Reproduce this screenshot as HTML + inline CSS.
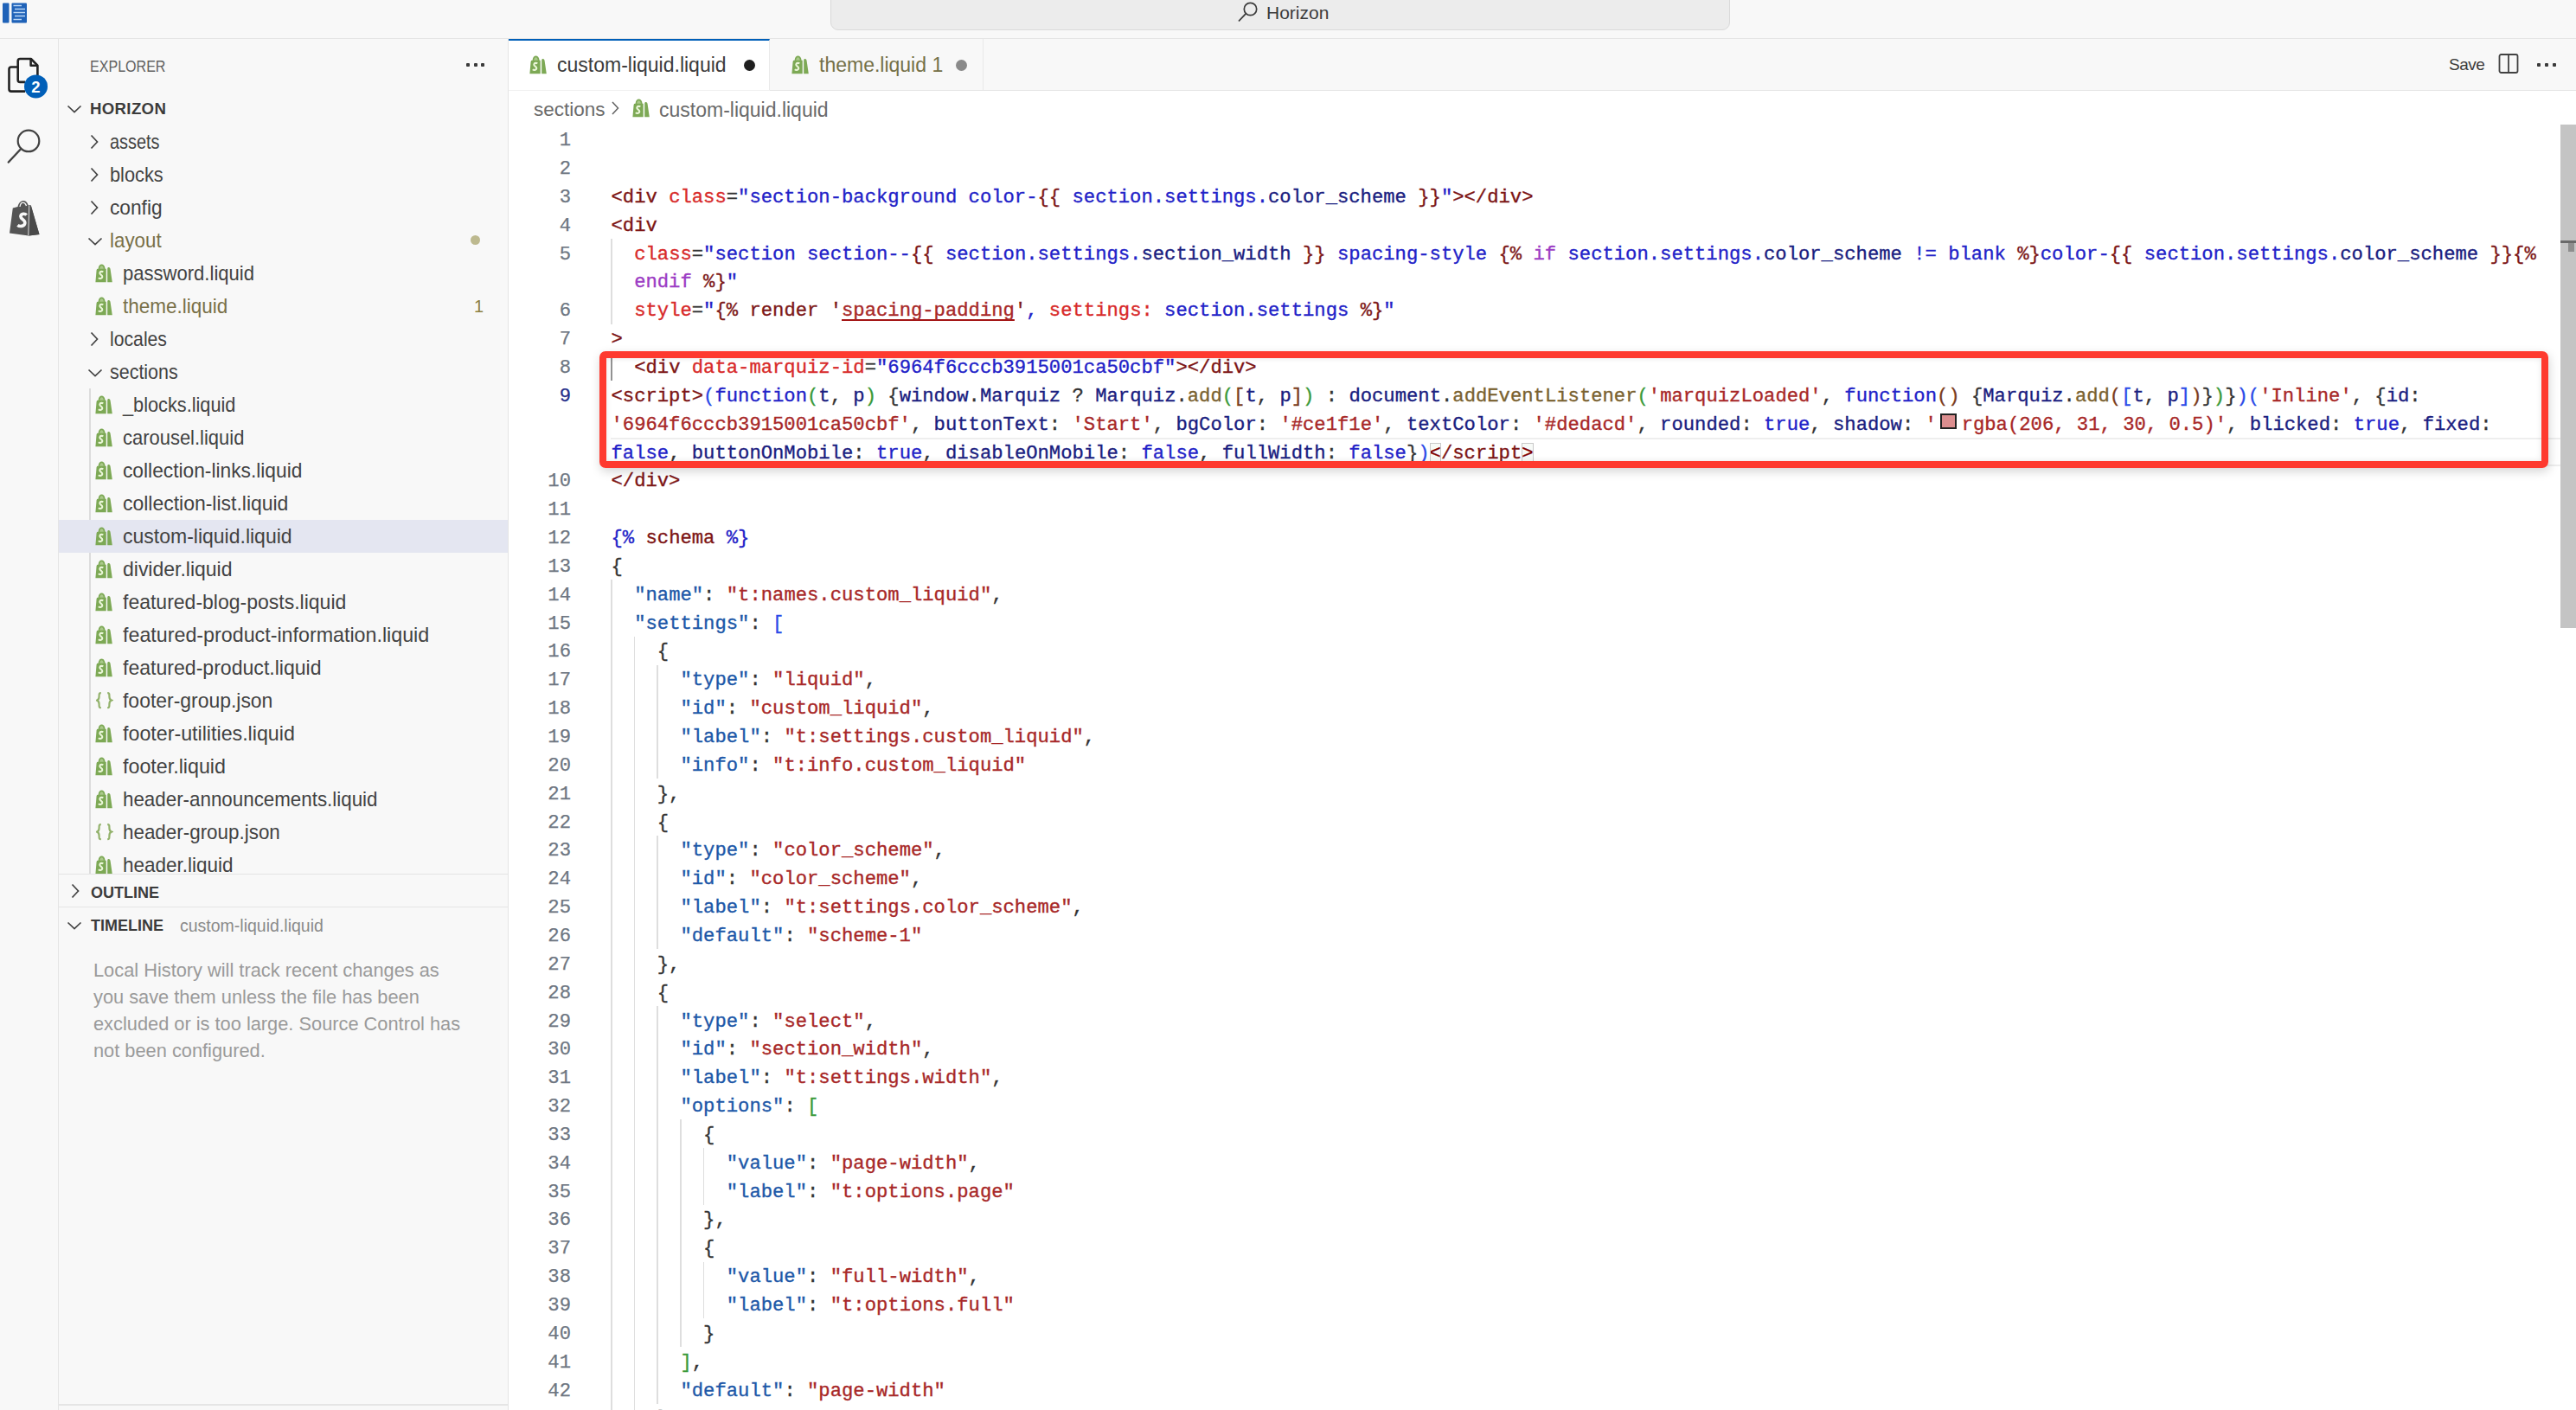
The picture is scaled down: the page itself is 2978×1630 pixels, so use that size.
<!DOCTYPE html>
<html><head><meta charset="utf-8"><style>
*{box-sizing:border-box;margin:0;padding:0}
html,body{width:2978px;height:1630px;overflow:hidden;background:#fff}
body{position:relative;font-family:"Liberation Sans",sans-serif;color:#3b3b3b}
.abs{position:absolute}
#title{position:absolute;left:0;top:0;width:2978px;height:45px;background:#f8f8f8;border-bottom:1px solid #e5e5e5}
#cmd{position:absolute;left:960px;top:-11px;width:1040px;height:46px;background:#ececec;border:1.5px solid #d9d9d9;border-radius:9px}
#cmdtxt{position:absolute;left:1464px;top:0px;font-size:21px;line-height:30px;color:#3b3b3b}
#act{position:absolute;left:0;top:45px;width:68px;height:1585px;background:#f8f8f8;border-right:1.5px solid #e5e5e5}
#side{position:absolute;left:68px;top:45px;width:520px;height:1585px;background:#f8f8f8;border-right:1.5px solid #e5e5e5}
#tabs{position:absolute;left:588px;top:45px;width:2390px;height:60px;background:#f8f8f8;border-bottom:1.5px solid #e5e5e5}
#tab1{position:absolute;left:588px;top:45px;width:302px;height:60px;background:#fff;border-top:2px solid #005fb8;border-right:1px solid #eaeaea}
#tab2{position:absolute;left:890px;top:45px;width:247px;height:59px;background:#f8f8f8;border-right:1px solid #e8e8e8}
.tabt{position:absolute;font-size:23px;line-height:60px;top:45px;white-space:pre}
#editor{position:absolute;left:588px;top:105px;width:2390px;height:1525px;background:#fff}
.bc{position:absolute;top:107.5px;font-size:22.5px;line-height:38px;color:#6a6a6a;white-space:pre}
.cl{position:absolute;height:32.85px;line-height:32.85px;font-family:"Liberation Mono",monospace;font-size:22.213px;white-space:pre;color:#3b3b3b;-webkit-text-stroke:0.35px currentColor}
.ln{position:absolute;left:560px;width:100px;text-align:right;height:32.85px;line-height:32.85px;font-family:"Liberation Mono",monospace;font-size:22.213px;color:#6e7681;-webkit-text-stroke:0.25px currentColor}
.ln.act{color:#262f8a}
.tg{color:#7d1515}.at{color:#d82a2a}.sv{color:#2222c8}.lq{color:#7d1818}.kw{color:#9c3cc4}.dk{color:#333333}
.nv{color:#1a2080}.fn{color:#7a6230}.st{color:#a82828}.b1{color:#2a4ae8}.b2{color:#3a9a3a}.b3{color:#7b3c1c}
.bl{color:#2222c8}.jk{color:#1d58a8}
.u{text-decoration:underline;text-decoration-color:#a31515;text-underline-offset:4px;text-decoration-thickness:2px}
.sw{display:inline-block;width:28.7px;height:20px;vertical-align:-3px;position:relative}
.sw:after{content:"";position:absolute;left:4.5px;top:-2px;width:14.7px;height:14.7px;border:2px solid #222;background:#dc8e8f}
.bx{outline:1.5px solid #c9c9c9;outline-offset:-1px;background:rgba(0,100,0,0.03);color:#800000}
.ig{position:absolute;width:1.7px;background:#dedede}
.ig.ac{background:#939393}
#curline{position:absolute;left:706px;width:2254px;height:32.85px;border-top:2px solid #eeeeee;border-bottom:2px solid #eeeeee}
#curgut{position:absolute;left:588px;width:118px;height:32.85px}
#scroll{position:absolute;left:2960px;top:144px;width:18px;height:582px;background:#c4c4c4}
#redbox{position:absolute;left:693px;top:406px;width:2253px;height:134.5px;border:8.3px solid #fe3a2f;border-radius:7px;box-shadow:1px 4px 12px rgba(0,0,0,0.17), inset 0 0 7px rgba(0,0,0,0.10)}
.shp{position:absolute}
.jsi{position:absolute;font-size:19px;line-height:38px;color:#8fb35f;letter-spacing:-1px;font-family:"Liberation Mono",monospace}
.chev{position:absolute}
.sbt{position:absolute;font-size:23.2px;line-height:38px;color:#424242;white-space:pre;transform-origin:0 50%}
.sbt.warn{color:#787048}
.selrow{position:absolute;left:68px;width:519px;height:38px;background:#e4e6f1}
.wdot{position:absolute;left:544px;width:11px;height:11px;border-radius:50%;background:#bdb98f}
.wnum{position:absolute;left:548px;font-size:20px;line-height:38px;color:#8d8040}
.tgd{position:absolute;width:1.5px;background:#dcdcdc}
.hdr{position:absolute;font-weight:bold;font-size:18.6px;line-height:38px;color:#3b3b3b}
</style></head><body>
<div id="title"></div>
<div id="cmd"></div>
<svg class="abs" style="left:1430px;top:1px" width="26" height="26" viewBox="0 0 26 26"><circle cx="15.5" cy="9.5" r="7.2" stroke="#3b3b3b" stroke-width="1.7" fill="none"/><path d="M10.4 14.6 L2 23.5" stroke="#3b3b3b" stroke-width="1.8"/></svg>
<div id="cmdtxt">Horizon</div>
<svg class="abs" style="left:2px;top:3px" width="30" height="24" viewBox="0 0 30 24">
 <rect x="1" y="0.5" width="7.5" height="23" rx="1" fill="#1f62b8"/>
 <rect x="11.5" y="0.5" width="17.5" height="23" rx="1" fill="#1f62b8"/>
 <path d="M13.5 3.5 H23 M15 7.5 H27 M13.5 11.5 H27 M15 15.5 H27 M13.5 19.5 H23" stroke="#bcd8f5" stroke-width="1.6"/>
</svg>

<div id="act"></div>
<svg class="abs" style="left:0px;top:55px" width="60" height="60" viewBox="0 55 60 60">
 <path d="M20.7 77.5 H13 Q10.5 77.5 10.5 80 V103 Q10.5 105.6 13 105.6 H29" stroke="#222" stroke-width="2.6" fill="none" stroke-linejoin="round"/>
 <path d="M29 94.9 H23.2 Q20.7 94.9 20.7 92.4 V70.5 Q20.7 68 23.2 68 H35.8 L43.4 75.6 V88" stroke="#222" stroke-width="2.6" fill="none" stroke-linejoin="round"/>
 <path d="M35.6 68.5 V75.8 H43" stroke="#222" stroke-width="2.6" fill="none" stroke-linejoin="round"/>
 <circle cx="41.5" cy="99.9" r="13.5" fill="#005fb8"/>
 <text x="41.5" y="106.6" text-anchor="middle" font-family="Liberation Sans" font-weight="bold" font-size="18.5" fill="#fff">2</text>
</svg>
<svg class="abs" style="left:6px;top:145px" width="44" height="48" viewBox="0 0 44 48">
 <circle cx="27" cy="17.9" r="12.3" stroke="#424242" stroke-width="2.2" fill="none"/>
 <path d="M17.8 27.5 L3.8 42.5" stroke="#424242" stroke-width="2.4" stroke-linecap="round"/>
</svg>
<svg class="abs" style="left:9px;top:231px" width="38" height="42" viewBox="0 0 38 42">
 <path d="M2 38.5 L5.8 9.5 L11.5 8 C12.5 3 15.5 0.8 18.5 1 C21.2 1.2 23 3.5 23.8 6.5 L26.5 6 L36.5 40 L24 41.5 Z" fill="#555"/>
 <path d="M26.8 6.2 L36.5 40 L24.5 41.5" fill="#4a4a4a"/>
 <path d="M24.7 7 L23.8 41" stroke="#ddd" stroke-width="1"/>
 <path d="M14 8 C14.5 4.8 16 3 18 3.1 C19.8 3.3 20.8 5 21.5 7" stroke="#f8f8f8" stroke-width="1.3" fill="none"/>
 <path d="M21.6 17.6 C20 15.6 15.4 15.6 14.9 19 C14.4 22.6 20.4 22.4 19.8 27 C19.3 31 13.6 31.2 11.4 29.4" stroke="#f8f8f8" stroke-width="3.6" fill="none"/>
</svg>

<div id="side"></div>
<div class="abs" style="left:103.5px;top:47px;font-size:19px;line-height:60px;color:#616161;transform:scaleX(0.845);transform-origin:0 50%">EXPLORER</div>
<div class="abs" style="left:539px;top:72.5px;width:4px;height:4px;background:#3b3b3b;border-radius:1px"></div>
<div class="abs" style="left:547.5px;top:72.5px;width:4px;height:4px;background:#3b3b3b;border-radius:1px"></div>
<div class="abs" style="left:556px;top:72.5px;width:4px;height:4px;background:#3b3b3b;border-radius:1px"></div>
<svg class="chev" style="left:77px;top:119.5px" width="18" height="12" viewBox="0 0 18 12"><path d="M1.5 2.5 L9 9.5 L16.5 2.5" stroke="#424242" stroke-width="1.7" fill="none"/></svg>
<div class="hdr" style="left:104px;top:106.8px;letter-spacing:0.35px">HORIZON</div>
<div class="tgd" style="left:103px;top:448.8px;height:561.7px"></div><div class="tgd" style="left:103px;top:296.8px;height:76.0px;opacity:0"></div>
<svg class="chev" style="left:102.5px;top:154.8px" width="12" height="18" viewBox="0 0 12 18"><path d="M2.5 1.5 L9.5 9 L2.5 16.5" stroke="#424242" stroke-width="1.7" fill="none"/></svg>
<div class="sbt" style="left:127.2px;top:144.8px;transform:scaleX(0.857)">assets</div>
<svg class="chev" style="left:102.5px;top:192.8px" width="12" height="18" viewBox="0 0 12 18"><path d="M2.5 1.5 L9.5 9 L2.5 16.5" stroke="#424242" stroke-width="1.7" fill="none"/></svg>
<div class="sbt" style="left:127.2px;top:182.8px;transform:scaleX(0.938)">blocks</div>
<svg class="chev" style="left:102.5px;top:230.8px" width="12" height="18" viewBox="0 0 12 18"><path d="M2.5 1.5 L9.5 9 L2.5 16.5" stroke="#424242" stroke-width="1.7" fill="none"/></svg>
<div class="sbt" style="left:127.2px;top:220.8px;transform:scaleX(0.979)">config</div>
<svg class="chev" style="left:100.5px;top:273.3px" width="18" height="12" viewBox="0 0 18 12"><path d="M1.5 2.5 L9 9.5 L16.5 2.5" stroke="#424242" stroke-width="1.7" fill="none"/></svg>
<div class="sbt warn" style="left:127.2px;top:258.8px;transform:scaleX(0.963)">layout</div>
<div class="wdot" style="top:272.3px"></div>
<svg class="shp" style="left:110.0px;top:304.6px" width="21" height="22" viewBox="0 0 21 22"><path d="M0.4 21.2 L1.6 7.2 Q1.8 5.8 3.2 5.8 L3.6 5.8 C3.9 2.2 5.6 0.6 7.5 0.6 C9.4 0.6 11.2 2.2 11.6 5.8 L12.7 5.8 L12.7 21.2 Z" fill="#7da955"/><path d="M5.2 5.8 C5.4 3.4 6.3 2.2 7.5 2.2 C8.7 2.2 9.6 3.4 9.8 5.8" fill="#a9c98a"/><path d="M14.2 21.2 L14.2 6 C14.2 4.6 14.8 4 15.6 4 C16.6 4 17.4 4.8 17.6 6.2 L19.8 21.2 Z" fill="#7da955"/><path d="M9.2 9.4 C8.4 8.6 5.6 8.4 5.3 10.6 C5.1 12.6 8.6 12.8 8.3 15.2 C8 17.4 5 17.2 3.8 16.2" stroke="#eaf6d8" stroke-width="2.1" fill="none"/></svg>
<div class="sbt" style="left:142px;top:296.8px;transform:scaleX(0.951)">password.liquid</div>
<svg class="shp" style="left:110.0px;top:342.6px" width="21" height="22" viewBox="0 0 21 22"><path d="M0.4 21.2 L1.6 7.2 Q1.8 5.8 3.2 5.8 L3.6 5.8 C3.9 2.2 5.6 0.6 7.5 0.6 C9.4 0.6 11.2 2.2 11.6 5.8 L12.7 5.8 L12.7 21.2 Z" fill="#7da955"/><path d="M5.2 5.8 C5.4 3.4 6.3 2.2 7.5 2.2 C8.7 2.2 9.6 3.4 9.8 5.8" fill="#a9c98a"/><path d="M14.2 21.2 L14.2 6 C14.2 4.6 14.8 4 15.6 4 C16.6 4 17.4 4.8 17.6 6.2 L19.8 21.2 Z" fill="#7da955"/><path d="M9.2 9.4 C8.4 8.6 5.6 8.4 5.3 10.6 C5.1 12.6 8.6 12.8 8.3 15.2 C8 17.4 5 17.2 3.8 16.2" stroke="#eaf6d8" stroke-width="2.1" fill="none"/></svg>
<div class="sbt warn" style="left:142px;top:334.8px;transform:scaleX(0.970)">theme.liquid</div>
<div class="wnum" style="top:334.8px">1</div>
<svg class="chev" style="left:102.5px;top:382.8px" width="12" height="18" viewBox="0 0 12 18"><path d="M2.5 1.5 L9.5 9 L2.5 16.5" stroke="#424242" stroke-width="1.7" fill="none"/></svg>
<div class="sbt" style="left:127.2px;top:372.8px;transform:scaleX(0.914)">locales</div>
<svg class="chev" style="left:100.5px;top:425.3px" width="18" height="12" viewBox="0 0 18 12"><path d="M1.5 2.5 L9 9.5 L16.5 2.5" stroke="#424242" stroke-width="1.7" fill="none"/></svg>
<div class="sbt" style="left:127.2px;top:410.8px;transform:scaleX(0.925)">sections</div>
<svg class="shp" style="left:110.0px;top:456.6px" width="21" height="22" viewBox="0 0 21 22"><path d="M0.4 21.2 L1.6 7.2 Q1.8 5.8 3.2 5.8 L3.6 5.8 C3.9 2.2 5.6 0.6 7.5 0.6 C9.4 0.6 11.2 2.2 11.6 5.8 L12.7 5.8 L12.7 21.2 Z" fill="#7da955"/><path d="M5.2 5.8 C5.4 3.4 6.3 2.2 7.5 2.2 C8.7 2.2 9.6 3.4 9.8 5.8" fill="#a9c98a"/><path d="M14.2 21.2 L14.2 6 C14.2 4.6 14.8 4 15.6 4 C16.6 4 17.4 4.8 17.6 6.2 L19.8 21.2 Z" fill="#7da955"/><path d="M9.2 9.4 C8.4 8.6 5.6 8.4 5.3 10.6 C5.1 12.6 8.6 12.8 8.3 15.2 C8 17.4 5 17.2 3.8 16.2" stroke="#eaf6d8" stroke-width="2.1" fill="none"/></svg>
<div class="sbt" style="left:142px;top:448.8px;transform:scaleX(0.937)">_blocks.liquid</div>
<svg class="shp" style="left:110.0px;top:494.6px" width="21" height="22" viewBox="0 0 21 22"><path d="M0.4 21.2 L1.6 7.2 Q1.8 5.8 3.2 5.8 L3.6 5.8 C3.9 2.2 5.6 0.6 7.5 0.6 C9.4 0.6 11.2 2.2 11.6 5.8 L12.7 5.8 L12.7 21.2 Z" fill="#7da955"/><path d="M5.2 5.8 C5.4 3.4 6.3 2.2 7.5 2.2 C8.7 2.2 9.6 3.4 9.8 5.8" fill="#a9c98a"/><path d="M14.2 21.2 L14.2 6 C14.2 4.6 14.8 4 15.6 4 C16.6 4 17.4 4.8 17.6 6.2 L19.8 21.2 Z" fill="#7da955"/><path d="M9.2 9.4 C8.4 8.6 5.6 8.4 5.3 10.6 C5.1 12.6 8.6 12.8 8.3 15.2 C8 17.4 5 17.2 3.8 16.2" stroke="#eaf6d8" stroke-width="2.1" fill="none"/></svg>
<div class="sbt" style="left:142px;top:486.8px;transform:scaleX(0.947)">carousel.liquid</div>
<svg class="shp" style="left:110.0px;top:532.6px" width="21" height="22" viewBox="0 0 21 22"><path d="M0.4 21.2 L1.6 7.2 Q1.8 5.8 3.2 5.8 L3.6 5.8 C3.9 2.2 5.6 0.6 7.5 0.6 C9.4 0.6 11.2 2.2 11.6 5.8 L12.7 5.8 L12.7 21.2 Z" fill="#7da955"/><path d="M5.2 5.8 C5.4 3.4 6.3 2.2 7.5 2.2 C8.7 2.2 9.6 3.4 9.8 5.8" fill="#a9c98a"/><path d="M14.2 21.2 L14.2 6 C14.2 4.6 14.8 4 15.6 4 C16.6 4 17.4 4.8 17.6 6.2 L19.8 21.2 Z" fill="#7da955"/><path d="M9.2 9.4 C8.4 8.6 5.6 8.4 5.3 10.6 C5.1 12.6 8.6 12.8 8.3 15.2 C8 17.4 5 17.2 3.8 16.2" stroke="#eaf6d8" stroke-width="2.1" fill="none"/></svg>
<div class="sbt" style="left:142px;top:524.8px;transform:scaleX(0.981)">collection-links.liquid</div>
<svg class="shp" style="left:110.0px;top:570.6px" width="21" height="22" viewBox="0 0 21 22"><path d="M0.4 21.2 L1.6 7.2 Q1.8 5.8 3.2 5.8 L3.6 5.8 C3.9 2.2 5.6 0.6 7.5 0.6 C9.4 0.6 11.2 2.2 11.6 5.8 L12.7 5.8 L12.7 21.2 Z" fill="#7da955"/><path d="M5.2 5.8 C5.4 3.4 6.3 2.2 7.5 2.2 C8.7 2.2 9.6 3.4 9.8 5.8" fill="#a9c98a"/><path d="M14.2 21.2 L14.2 6 C14.2 4.6 14.8 4 15.6 4 C16.6 4 17.4 4.8 17.6 6.2 L19.8 21.2 Z" fill="#7da955"/><path d="M9.2 9.4 C8.4 8.6 5.6 8.4 5.3 10.6 C5.1 12.6 8.6 12.8 8.3 15.2 C8 17.4 5 17.2 3.8 16.2" stroke="#eaf6d8" stroke-width="2.1" fill="none"/></svg>
<div class="sbt" style="left:142px;top:562.8px;transform:scaleX(0.990)">collection-list.liquid</div>
<div class="selrow" style="top:600.8px"></div>
<svg class="shp" style="left:110.0px;top:608.6px" width="21" height="22" viewBox="0 0 21 22"><path d="M0.4 21.2 L1.6 7.2 Q1.8 5.8 3.2 5.8 L3.6 5.8 C3.9 2.2 5.6 0.6 7.5 0.6 C9.4 0.6 11.2 2.2 11.6 5.8 L12.7 5.8 L12.7 21.2 Z" fill="#7da955"/><path d="M5.2 5.8 C5.4 3.4 6.3 2.2 7.5 2.2 C8.7 2.2 9.6 3.4 9.8 5.8" fill="#a9c98a"/><path d="M14.2 21.2 L14.2 6 C14.2 4.6 14.8 4 15.6 4 C16.6 4 17.4 4.8 17.6 6.2 L19.8 21.2 Z" fill="#7da955"/><path d="M9.2 9.4 C8.4 8.6 5.6 8.4 5.3 10.6 C5.1 12.6 8.6 12.8 8.3 15.2 C8 17.4 5 17.2 3.8 16.2" stroke="#eaf6d8" stroke-width="2.1" fill="none"/></svg>
<div class="sbt" style="left:142px;top:600.8px;transform:scaleX(0.992)">custom-liquid.liquid</div>
<svg class="shp" style="left:110.0px;top:646.6px" width="21" height="22" viewBox="0 0 21 22"><path d="M0.4 21.2 L1.6 7.2 Q1.8 5.8 3.2 5.8 L3.6 5.8 C3.9 2.2 5.6 0.6 7.5 0.6 C9.4 0.6 11.2 2.2 11.6 5.8 L12.7 5.8 L12.7 21.2 Z" fill="#7da955"/><path d="M5.2 5.8 C5.4 3.4 6.3 2.2 7.5 2.2 C8.7 2.2 9.6 3.4 9.8 5.8" fill="#a9c98a"/><path d="M14.2 21.2 L14.2 6 C14.2 4.6 14.8 4 15.6 4 C16.6 4 17.4 4.8 17.6 6.2 L19.8 21.2 Z" fill="#7da955"/><path d="M9.2 9.4 C8.4 8.6 5.6 8.4 5.3 10.6 C5.1 12.6 8.6 12.8 8.3 15.2 C8 17.4 5 17.2 3.8 16.2" stroke="#eaf6d8" stroke-width="2.1" fill="none"/></svg>
<div class="sbt" style="left:142px;top:638.8px;transform:scaleX(0.991)">divider.liquid</div>
<svg class="shp" style="left:110.0px;top:684.6px" width="21" height="22" viewBox="0 0 21 22"><path d="M0.4 21.2 L1.6 7.2 Q1.8 5.8 3.2 5.8 L3.6 5.8 C3.9 2.2 5.6 0.6 7.5 0.6 C9.4 0.6 11.2 2.2 11.6 5.8 L12.7 5.8 L12.7 21.2 Z" fill="#7da955"/><path d="M5.2 5.8 C5.4 3.4 6.3 2.2 7.5 2.2 C8.7 2.2 9.6 3.4 9.8 5.8" fill="#a9c98a"/><path d="M14.2 21.2 L14.2 6 C14.2 4.6 14.8 4 15.6 4 C16.6 4 17.4 4.8 17.6 6.2 L19.8 21.2 Z" fill="#7da955"/><path d="M9.2 9.4 C8.4 8.6 5.6 8.4 5.3 10.6 C5.1 12.6 8.6 12.8 8.3 15.2 C8 17.4 5 17.2 3.8 16.2" stroke="#eaf6d8" stroke-width="2.1" fill="none"/></svg>
<div class="sbt" style="left:142px;top:676.8px;transform:scaleX(0.992)">featured-blog-posts.liquid</div>
<svg class="shp" style="left:110.0px;top:722.6px" width="21" height="22" viewBox="0 0 21 22"><path d="M0.4 21.2 L1.6 7.2 Q1.8 5.8 3.2 5.8 L3.6 5.8 C3.9 2.2 5.6 0.6 7.5 0.6 C9.4 0.6 11.2 2.2 11.6 5.8 L12.7 5.8 L12.7 21.2 Z" fill="#7da955"/><path d="M5.2 5.8 C5.4 3.4 6.3 2.2 7.5 2.2 C8.7 2.2 9.6 3.4 9.8 5.8" fill="#a9c98a"/><path d="M14.2 21.2 L14.2 6 C14.2 4.6 14.8 4 15.6 4 C16.6 4 17.4 4.8 17.6 6.2 L19.8 21.2 Z" fill="#7da955"/><path d="M9.2 9.4 C8.4 8.6 5.6 8.4 5.3 10.6 C5.1 12.6 8.6 12.8 8.3 15.2 C8 17.4 5 17.2 3.8 16.2" stroke="#eaf6d8" stroke-width="2.1" fill="none"/></svg>
<div class="sbt" style="left:142px;top:714.8px;transform:scaleX(1.003)">featured-product-information.liquid</div>
<svg class="shp" style="left:110.0px;top:760.6px" width="21" height="22" viewBox="0 0 21 22"><path d="M0.4 21.2 L1.6 7.2 Q1.8 5.8 3.2 5.8 L3.6 5.8 C3.9 2.2 5.6 0.6 7.5 0.6 C9.4 0.6 11.2 2.2 11.6 5.8 L12.7 5.8 L12.7 21.2 Z" fill="#7da955"/><path d="M5.2 5.8 C5.4 3.4 6.3 2.2 7.5 2.2 C8.7 2.2 9.6 3.4 9.8 5.8" fill="#a9c98a"/><path d="M14.2 21.2 L14.2 6 C14.2 4.6 14.8 4 15.6 4 C16.6 4 17.4 4.8 17.6 6.2 L19.8 21.2 Z" fill="#7da955"/><path d="M9.2 9.4 C8.4 8.6 5.6 8.4 5.3 10.6 C5.1 12.6 8.6 12.8 8.3 15.2 C8 17.4 5 17.2 3.8 16.2" stroke="#eaf6d8" stroke-width="2.1" fill="none"/></svg>
<div class="sbt" style="left:142px;top:752.8px;transform:scaleX(0.995)">featured-product.liquid</div>
<svg class="shp" style="left:110.5px;top:799.8px" width="20" height="20" viewBox="0 0 20 20"><path d="M5.8 1.2 C3.4 1.2 3.6 2.6 3.6 5 C3.6 7.8 3.2 9 1.2 9.6 C3.2 10.2 3.6 11.4 3.6 14.2 C3.6 16.6 3.4 18.2 5.8 18.2" stroke="#93b26c" stroke-width="2.2" fill="none"/><path d="M13.2 1.2 C15.6 1.2 15.4 2.6 15.4 5 C15.4 7.8 15.8 9 17.8 9.6 C15.8 10.2 15.4 11.4 15.4 14.2 C15.4 16.6 15.6 18.2 13.2 18.2" stroke="#93b26c" stroke-width="2.2" fill="none"/></svg>
<div class="sbt" style="left:142px;top:790.8px;transform:scaleX(0.989)">footer-group.json</div>
<svg class="shp" style="left:110.0px;top:836.6px" width="21" height="22" viewBox="0 0 21 22"><path d="M0.4 21.2 L1.6 7.2 Q1.8 5.8 3.2 5.8 L3.6 5.8 C3.9 2.2 5.6 0.6 7.5 0.6 C9.4 0.6 11.2 2.2 11.6 5.8 L12.7 5.8 L12.7 21.2 Z" fill="#7da955"/><path d="M5.2 5.8 C5.4 3.4 6.3 2.2 7.5 2.2 C8.7 2.2 9.6 3.4 9.8 5.8" fill="#a9c98a"/><path d="M14.2 21.2 L14.2 6 C14.2 4.6 14.8 4 15.6 4 C16.6 4 17.4 4.8 17.6 6.2 L19.8 21.2 Z" fill="#7da955"/><path d="M9.2 9.4 C8.4 8.6 5.6 8.4 5.3 10.6 C5.1 12.6 8.6 12.8 8.3 15.2 C8 17.4 5 17.2 3.8 16.2" stroke="#eaf6d8" stroke-width="2.1" fill="none"/></svg>
<div class="sbt" style="left:142px;top:828.8px;transform:scaleX(1.002)">footer-utilities.liquid</div>
<svg class="shp" style="left:110.0px;top:874.6px" width="21" height="22" viewBox="0 0 21 22"><path d="M0.4 21.2 L1.6 7.2 Q1.8 5.8 3.2 5.8 L3.6 5.8 C3.9 2.2 5.6 0.6 7.5 0.6 C9.4 0.6 11.2 2.2 11.6 5.8 L12.7 5.8 L12.7 21.2 Z" fill="#7da955"/><path d="M5.2 5.8 C5.4 3.4 6.3 2.2 7.5 2.2 C8.7 2.2 9.6 3.4 9.8 5.8" fill="#a9c98a"/><path d="M14.2 21.2 L14.2 6 C14.2 4.6 14.8 4 15.6 4 C16.6 4 17.4 4.8 17.6 6.2 L19.8 21.2 Z" fill="#7da955"/><path d="M9.2 9.4 C8.4 8.6 5.6 8.4 5.3 10.6 C5.1 12.6 8.6 12.8 8.3 15.2 C8 17.4 5 17.2 3.8 16.2" stroke="#eaf6d8" stroke-width="2.1" fill="none"/></svg>
<div class="sbt" style="left:142px;top:866.8px;transform:scaleX(1.003)">footer.liquid</div>
<svg class="shp" style="left:110.0px;top:912.6px" width="21" height="22" viewBox="0 0 21 22"><path d="M0.4 21.2 L1.6 7.2 Q1.8 5.8 3.2 5.8 L3.6 5.8 C3.9 2.2 5.6 0.6 7.5 0.6 C9.4 0.6 11.2 2.2 11.6 5.8 L12.7 5.8 L12.7 21.2 Z" fill="#7da955"/><path d="M5.2 5.8 C5.4 3.4 6.3 2.2 7.5 2.2 C8.7 2.2 9.6 3.4 9.8 5.8" fill="#a9c98a"/><path d="M14.2 21.2 L14.2 6 C14.2 4.6 14.8 4 15.6 4 C16.6 4 17.4 4.8 17.6 6.2 L19.8 21.2 Z" fill="#7da955"/><path d="M9.2 9.4 C8.4 8.6 5.6 8.4 5.3 10.6 C5.1 12.6 8.6 12.8 8.3 15.2 C8 17.4 5 17.2 3.8 16.2" stroke="#eaf6d8" stroke-width="2.1" fill="none"/></svg>
<div class="sbt" style="left:142px;top:904.8px;transform:scaleX(0.964)">header-announcements.liquid</div>
<svg class="shp" style="left:110.5px;top:951.8px" width="20" height="20" viewBox="0 0 20 20"><path d="M5.8 1.2 C3.4 1.2 3.6 2.6 3.6 5 C3.6 7.8 3.2 9 1.2 9.6 C3.2 10.2 3.6 11.4 3.6 14.2 C3.6 16.6 3.4 18.2 5.8 18.2" stroke="#93b26c" stroke-width="2.2" fill="none"/><path d="M13.2 1.2 C15.6 1.2 15.4 2.6 15.4 5 C15.4 7.8 15.8 9 17.8 9.6 C15.8 10.2 15.4 11.4 15.4 14.2 C15.4 16.6 15.6 18.2 13.2 18.2" stroke="#93b26c" stroke-width="2.2" fill="none"/></svg>
<div class="sbt" style="left:142px;top:942.8px;transform:scaleX(0.966)">header-group.json</div>
<svg class="shp" style="left:110.0px;top:988.6px" width="21" height="22" viewBox="0 0 21 22"><path d="M0.4 21.2 L1.6 7.2 Q1.8 5.8 3.2 5.8 L3.6 5.8 C3.9 2.2 5.6 0.6 7.5 0.6 C9.4 0.6 11.2 2.2 11.6 5.8 L12.7 5.8 L12.7 21.2 Z" fill="#7da955"/><path d="M5.2 5.8 C5.4 3.4 6.3 2.2 7.5 2.2 C8.7 2.2 9.6 3.4 9.8 5.8" fill="#a9c98a"/><path d="M14.2 21.2 L14.2 6 C14.2 4.6 14.8 4 15.6 4 C16.6 4 17.4 4.8 17.6 6.2 L19.8 21.2 Z" fill="#7da955"/><path d="M9.2 9.4 C8.4 8.6 5.6 8.4 5.3 10.6 C5.1 12.6 8.6 12.8 8.3 15.2 C8 17.4 5 17.2 3.8 16.2" stroke="#eaf6d8" stroke-width="2.1" fill="none"/></svg>
<div class="sbt" style="left:142px;top:980.8px;transform:scaleX(0.970)">header.liquid</div>
<div class="abs" style="left:68px;top:1010px;width:519px;height:620px;background:#f8f8f8;border-top:1.5px solid #e5e5e5"></div>
<div class="abs" style="left:68px;top:1047.5px;width:519px;height:1.5px;background:#e5e5e5"></div>
<svg class="chev" style="left:81px;top:1021px" width="12" height="18" viewBox="0 0 12 18"><path d="M2.5 1.5 L9.5 9 L2.5 16.5" stroke="#424242" stroke-width="1.7" fill="none"/></svg>
<div class="hdr" style="left:105px;top:1012.5px;font-size:18px">OUTLINE</div>
<svg class="chev" style="left:77px;top:1064px" width="18" height="12" viewBox="0 0 18 12"><path d="M1.5 2.5 L9 9.5 L16.5 2.5" stroke="#424242" stroke-width="1.7" fill="none"/></svg>
<div class="hdr" style="left:105px;top:1050.5px;font-size:18px">TIMELINE</div>
<div class="abs" style="left:208px;top:1050.5px;font-size:19.5px;line-height:38px;color:#8a8a8a">custom-liquid.liquid</div>
<div class="abs" style="left:108px;top:1105.5px;width:470px;font-size:21.8px;line-height:31px;color:#9a9a9a">Local History will track recent changes as<br>you save them unless the file has been<br>excluded or is too large. Source Control has<br>not been configured.</div>
<div class="abs" style="left:68px;top:1623px;width:519px;height:1.5px;background:#e5e5e5"></div>

<div id="tabs"></div>
<div id="tab1"></div>
<div id="tab2"></div>
<svg class="shp" style="left:612.0px;top:64.0px" width="21" height="22" viewBox="0 0 21 22"><path d="M0.4 21.2 L1.6 7.2 Q1.8 5.8 3.2 5.8 L3.6 5.8 C3.9 2.2 5.6 0.6 7.5 0.6 C9.4 0.6 11.2 2.2 11.6 5.8 L12.7 5.8 L12.7 21.2 Z" fill="#7da955"/><path d="M5.2 5.8 C5.4 3.4 6.3 2.2 7.5 2.2 C8.7 2.2 9.6 3.4 9.8 5.8" fill="#a9c98a"/><path d="M14.2 21.2 L14.2 6 C14.2 4.6 14.8 4 15.6 4 C16.6 4 17.4 4.8 17.6 6.2 L19.8 21.2 Z" fill="#7da955"/><path d="M9.2 9.4 C8.4 8.6 5.6 8.4 5.3 10.6 C5.1 12.6 8.6 12.8 8.3 15.2 C8 17.4 5 17.2 3.8 16.2" stroke="#eaf6d8" stroke-width="2.1" fill="none"/></svg><svg class="shp" style="left:915.0px;top:64.0px" width="21" height="22" viewBox="0 0 21 22"><path d="M0.4 21.2 L1.6 7.2 Q1.8 5.8 3.2 5.8 L3.6 5.8 C3.9 2.2 5.6 0.6 7.5 0.6 C9.4 0.6 11.2 2.2 11.6 5.8 L12.7 5.8 L12.7 21.2 Z" fill="#7da955"/><path d="M5.2 5.8 C5.4 3.4 6.3 2.2 7.5 2.2 C8.7 2.2 9.6 3.4 9.8 5.8" fill="#a9c98a"/><path d="M14.2 21.2 L14.2 6 C14.2 4.6 14.8 4 15.6 4 C16.6 4 17.4 4.8 17.6 6.2 L19.8 21.2 Z" fill="#7da955"/><path d="M9.2 9.4 C8.4 8.6 5.6 8.4 5.3 10.6 C5.1 12.6 8.6 12.8 8.3 15.2 C8 17.4 5 17.2 3.8 16.2" stroke="#eaf6d8" stroke-width="2.1" fill="none"/></svg>
<div class="tabt" style="left:644px;color:#3b3b3b">custom-liquid.liquid</div>
<div class="abs" style="left:859.5px;top:68.5px;width:13px;height:13px;border-radius:50%;background:#1f1f1f"></div>
<div class="tabt" style="left:947px;color:#747048">theme.liquid 1</div>
<div class="abs" style="left:1104.5px;top:68.5px;width:13px;height:13px;border-radius:50%;background:#8a8a8a"></div>
<div class="abs" style="left:2831px;top:45px;font-size:19px;line-height:60px;color:#3b3b3b;letter-spacing:-0.5px">Save</div>
<svg class="abs" style="left:2887px;top:61px" width="26" height="26" viewBox="0 0 26 26"><rect x="2.5" y="2" width="21" height="21" rx="2" stroke="#424242" stroke-width="1.8" fill="none"/><path d="M13 2 V23" stroke="#424242" stroke-width="1.8"/></svg>
<div class="abs" style="left:2933px;top:72.5px;width:4px;height:4px;background:#3b3b3b;border-radius:1px"></div>
<div class="abs" style="left:2942px;top:72.5px;width:4px;height:4px;background:#3b3b3b;border-radius:1px"></div>
<div class="abs" style="left:2951px;top:72.5px;width:4px;height:4px;background:#3b3b3b;border-radius:1px"></div>

<div id="editor"></div>
<div class="abs" style="left:588px;top:104px;width:302px;height:1px;background:#f0f0f0"></div>
<div class="bc" style="left:617px">sections</div>
<svg class="abs" style="left:705px;top:116px" width="12" height="18" viewBox="0 0 12 18"><path d="M3 2 L9.5 9 L3 16" stroke="#616161" stroke-width="1.5" fill="none"/></svg>
<svg class="shp" style="left:731.0px;top:113.5px" width="21" height="22" viewBox="0 0 21 22"><path d="M0.4 21.2 L1.6 7.2 Q1.8 5.8 3.2 5.8 L3.6 5.8 C3.9 2.2 5.6 0.6 7.5 0.6 C9.4 0.6 11.2 2.2 11.6 5.8 L12.7 5.8 L12.7 21.2 Z" fill="#7da955"/><path d="M5.2 5.8 C5.4 3.4 6.3 2.2 7.5 2.2 C8.7 2.2 9.6 3.4 9.8 5.8" fill="#a9c98a"/><path d="M14.2 21.2 L14.2 6 C14.2 4.6 14.8 4 15.6 4 C16.6 4 17.4 4.8 17.6 6.2 L19.8 21.2 Z" fill="#7da955"/><path d="M9.2 9.4 C8.4 8.6 5.6 8.4 5.3 10.6 C5.1 12.6 8.6 12.8 8.3 15.2 C8 17.4 5 17.2 3.8 16.2" stroke="#eaf6d8" stroke-width="2.1" fill="none"/></svg>
<div class="bc" style="left:762px;font-size:23px">custom-liquid.liquid</div>

<div id="curline" style="top:506.00px"></div>
<div class="ig" style="left:706.00px;top:276.05px;height:98.55px"></div>
<div class="ig ac" style="left:706.00px;top:407.45px;height:32.85px"></div>
<div class="ig" style="left:706.00px;top:670.25px;height:985.50px"></div>
<div class="ig" style="left:732.64px;top:735.95px;height:919.80px"></div>
<div class="ig" style="left:759.28px;top:768.80px;height:131.40px"></div>
<div class="ig" style="left:759.28px;top:965.90px;height:131.40px"></div>
<div class="ig" style="left:759.28px;top:1163.00px;height:459.90px"></div>
<div class="ig" style="left:785.92px;top:1294.40px;height:262.80px"></div>
<div class="ig" style="left:812.56px;top:1327.25px;height:65.70px"></div>
<div class="ig" style="left:812.56px;top:1458.65px;height:65.70px"></div>
<div class="ln" style="top:147.15px">1</div>
<div class="cl" style="top:147.15px;left:706.50px"></div>
<div class="ln" style="top:180.00px">2</div>
<div class="cl" style="top:180.00px;left:706.50px"></div>
<div class="ln" style="top:212.85px">3</div>
<div class="cl" style="top:212.85px;left:706.50px"><span class="tg">&lt;div</span><span class="dk"> </span><span class="at">class</span><span class="dk">=</span><span class="sv">&quot;section-background color-</span><span class="lq">{{</span><span class="sv"> section.settings.</span><span class="nv">color_scheme </span><span class="lq">}}</span><span class="sv">&quot;</span><span class="tg">&gt;&lt;/div&gt;</span></div>
<div class="ln" style="top:245.70px">4</div>
<div class="cl" style="top:245.70px;left:706.50px"><span class="tg">&lt;div</span></div>
<div class="ln" style="top:278.55px">5</div>
<div class="cl" style="top:278.55px;left:706.50px"><span class="dk">  </span><span class="at">class</span><span class="dk">=</span><span class="sv">&quot;section section--</span><span class="lq">{{</span><span class="sv"> section.settings.</span><span class="nv">section_width </span><span class="lq">}}</span><span class="sv"> spacing-style </span><span class="lq">{%</span><span class="kw"> if </span><span class="sv">section.settings.</span><span class="nv">color_scheme </span><span class="sv">!= blank </span><span class="lq">%}</span><span class="sv">color-</span><span class="lq">{{</span><span class="sv"> section.settings.</span><span class="nv">color_scheme </span><span class="lq">}}{%</span></div>
<div class="cl" style="top:311.40px;left:733.14px"><span class="kw">endif</span><span class="lq"> %}</span><span class="sv">&quot;</span></div>
<div class="ln" style="top:344.25px">6</div>
<div class="cl" style="top:344.25px;left:706.50px"><span class="dk">  </span><span class="at">style</span><span class="dk">=</span><span class="sv">&quot;</span><span class="lq">{% render &#x27;</span><span class="st u">spacing-padding</span><span class="lq">&#x27;</span><span class="sv">,</span><span class="at"> settings:</span><span class="sv"> section.settings</span><span class="lq"> %}</span><span class="sv">&quot;</span></div>
<div class="ln" style="top:377.10px">7</div>
<div class="cl" style="top:377.10px;left:706.50px"><span class="tg">&gt;</span></div>
<div class="ln" style="top:409.95px">8</div>
<div class="cl" style="top:409.95px;left:706.50px"><span class="dk">  </span><span class="tg">&lt;div</span><span class="dk"> </span><span class="at">data-marquiz-id</span><span class="dk">=</span><span class="sv">&quot;6964f6cccb3915001ca50cbf&quot;</span><span class="tg">&gt;&lt;/div&gt;</span></div>
<div class="ln act" style="top:442.80px">9</div>
<div class="cl" style="top:442.80px;left:706.50px"><span class="tg">&lt;script&gt;</span><span class="b1">(</span><span class="bl">function</span><span class="b2">(</span><span class="nv">t</span><span class="dk">, </span><span class="nv">p</span><span class="b2">)</span><span class="dk"> {</span><span class="nv">window</span><span class="dk">.</span><span class="nv">Marquiz</span><span class="dk"> ? </span><span class="nv">Marquiz</span><span class="dk">.</span><span class="fn">add</span><span class="b2">(</span><span class="b3">[</span><span class="nv">t</span><span class="dk">, </span><span class="nv">p</span><span class="b3">]</span><span class="b2">)</span><span class="dk"> : </span><span class="nv">document</span><span class="dk">.</span><span class="fn">addEventListener</span><span class="b2">(</span><span class="st">&#x27;marquizLoaded&#x27;</span><span class="dk">, </span><span class="bl">function</span><span class="b3">()</span><span class="dk"> {</span><span class="nv">Marquiz</span><span class="dk">.</span><span class="fn">add</span><span class="b3">(</span><span class="b1">[</span><span class="nv">t</span><span class="dk">, </span><span class="nv">p</span><span class="b1">]</span><span class="b3">)</span><span class="dk">}</span><span class="b2">)</span><span class="dk">}</span><span class="b1">)</span><span class="b1">(</span><span class="st">&#x27;Inline&#x27;</span><span class="dk">, {</span><span class="nv">id</span><span class="dk">:</span></div>
<div class="cl" style="top:475.65px;left:706.50px"><span class="st">&#x27;6964f6cccb3915001ca50cbf&#x27;</span><span class="dk">, </span><span class="nv">buttonText</span><span class="dk">: </span><span class="st">&#x27;Start&#x27;</span><span class="dk">, </span><span class="nv">bgColor</span><span class="dk">: </span><span class="st">&#x27;#ce1f1e&#x27;</span><span class="dk">, </span><span class="nv">textColor</span><span class="dk">: </span><span class="st">&#x27;#dedacd&#x27;</span><span class="dk">, </span><span class="nv">rounded</span><span class="dk">: </span><span class="bl">true</span><span class="dk">, </span><span class="nv">shadow</span><span class="dk">: </span><span class="st">&#x27;</span><span class="sw"></span><span class="st">rgba(206, 31, 30, 0.5)&#x27;</span><span class="dk">, </span><span class="nv">blicked</span><span class="dk">: </span><span class="bl">true</span><span class="dk">, </span><span class="nv">fixed</span><span class="dk">:</span></div>
<div class="cl" style="top:508.50px;left:706.50px"><span class="bl">false</span><span class="dk">, </span><span class="nv">buttonOnMobile</span><span class="dk">: </span><span class="bl">true</span><span class="dk">, </span><span class="nv">disableOnMobile</span><span class="dk">: </span><span class="bl">false</span><span class="dk">, </span><span class="nv">fullWidth</span><span class="dk">: </span><span class="bl">false</span><span class="dk">}</span><span class="b1">)</span><span class="bx">&lt;</span><span class="tg">/script</span><span class="bx">&gt;</span></div>
<div class="ln" style="top:541.35px">10</div>
<div class="cl" style="top:541.35px;left:706.50px"><span class="tg">&lt;/div&gt;</span></div>
<div class="ln" style="top:574.20px">11</div>
<div class="cl" style="top:574.20px;left:706.50px"></div>
<div class="ln" style="top:607.05px">12</div>
<div class="cl" style="top:607.05px;left:706.50px"><span class="bl">{%</span><span class="tg"> schema </span><span class="bl">%}</span></div>
<div class="ln" style="top:639.90px">13</div>
<div class="cl" style="top:639.90px;left:706.50px"><span class="dk">{</span></div>
<div class="ln" style="top:672.75px">14</div>
<div class="cl" style="top:672.75px;left:706.50px"><span class="dk">  </span><span class="jk">&quot;name&quot;</span><span class="dk">: </span><span class="st">&quot;t:names.custom_liquid&quot;</span><span class="dk">,</span></div>
<div class="ln" style="top:705.60px">15</div>
<div class="cl" style="top:705.60px;left:706.50px"><span class="dk">  </span><span class="jk">&quot;settings&quot;</span><span class="dk">: </span><span class="b1">[</span></div>
<div class="ln" style="top:738.45px">16</div>
<div class="cl" style="top:738.45px;left:706.50px"><span class="dk">    {</span></div>
<div class="ln" style="top:771.30px">17</div>
<div class="cl" style="top:771.30px;left:706.50px"><span class="dk">      </span><span class="jk">&quot;type&quot;</span><span class="dk">: </span><span class="st">&quot;liquid&quot;</span><span class="dk">,</span></div>
<div class="ln" style="top:804.15px">18</div>
<div class="cl" style="top:804.15px;left:706.50px"><span class="dk">      </span><span class="jk">&quot;id&quot;</span><span class="dk">: </span><span class="st">&quot;custom_liquid&quot;</span><span class="dk">,</span></div>
<div class="ln" style="top:837.00px">19</div>
<div class="cl" style="top:837.00px;left:706.50px"><span class="dk">      </span><span class="jk">&quot;label&quot;</span><span class="dk">: </span><span class="st">&quot;t:settings.custom_liquid&quot;</span><span class="dk">,</span></div>
<div class="ln" style="top:869.85px">20</div>
<div class="cl" style="top:869.85px;left:706.50px"><span class="dk">      </span><span class="jk">&quot;info&quot;</span><span class="dk">: </span><span class="st">&quot;t:info.custom_liquid&quot;</span></div>
<div class="ln" style="top:902.70px">21</div>
<div class="cl" style="top:902.70px;left:706.50px"><span class="dk">    },</span></div>
<div class="ln" style="top:935.55px">22</div>
<div class="cl" style="top:935.55px;left:706.50px"><span class="dk">    {</span></div>
<div class="ln" style="top:968.40px">23</div>
<div class="cl" style="top:968.40px;left:706.50px"><span class="dk">      </span><span class="jk">&quot;type&quot;</span><span class="dk">: </span><span class="st">&quot;color_scheme&quot;</span><span class="dk">,</span></div>
<div class="ln" style="top:1001.25px">24</div>
<div class="cl" style="top:1001.25px;left:706.50px"><span class="dk">      </span><span class="jk">&quot;id&quot;</span><span class="dk">: </span><span class="st">&quot;color_scheme&quot;</span><span class="dk">,</span></div>
<div class="ln" style="top:1034.10px">25</div>
<div class="cl" style="top:1034.10px;left:706.50px"><span class="dk">      </span><span class="jk">&quot;label&quot;</span><span class="dk">: </span><span class="st">&quot;t:settings.color_scheme&quot;</span><span class="dk">,</span></div>
<div class="ln" style="top:1066.95px">26</div>
<div class="cl" style="top:1066.95px;left:706.50px"><span class="dk">      </span><span class="jk">&quot;default&quot;</span><span class="dk">: </span><span class="st">&quot;scheme-1&quot;</span></div>
<div class="ln" style="top:1099.80px">27</div>
<div class="cl" style="top:1099.80px;left:706.50px"><span class="dk">    },</span></div>
<div class="ln" style="top:1132.65px">28</div>
<div class="cl" style="top:1132.65px;left:706.50px"><span class="dk">    {</span></div>
<div class="ln" style="top:1165.50px">29</div>
<div class="cl" style="top:1165.50px;left:706.50px"><span class="dk">      </span><span class="jk">&quot;type&quot;</span><span class="dk">: </span><span class="st">&quot;select&quot;</span><span class="dk">,</span></div>
<div class="ln" style="top:1198.35px">30</div>
<div class="cl" style="top:1198.35px;left:706.50px"><span class="dk">      </span><span class="jk">&quot;id&quot;</span><span class="dk">: </span><span class="st">&quot;section_width&quot;</span><span class="dk">,</span></div>
<div class="ln" style="top:1231.20px">31</div>
<div class="cl" style="top:1231.20px;left:706.50px"><span class="dk">      </span><span class="jk">&quot;label&quot;</span><span class="dk">: </span><span class="st">&quot;t:settings.width&quot;</span><span class="dk">,</span></div>
<div class="ln" style="top:1264.05px">32</div>
<div class="cl" style="top:1264.05px;left:706.50px"><span class="dk">      </span><span class="jk">&quot;options&quot;</span><span class="dk">: </span><span class="b2">[</span></div>
<div class="ln" style="top:1296.90px">33</div>
<div class="cl" style="top:1296.90px;left:706.50px"><span class="dk">        {</span></div>
<div class="ln" style="top:1329.75px">34</div>
<div class="cl" style="top:1329.75px;left:706.50px"><span class="dk">          </span><span class="jk">&quot;value&quot;</span><span class="dk">: </span><span class="st">&quot;page-width&quot;</span><span class="dk">,</span></div>
<div class="ln" style="top:1362.60px">35</div>
<div class="cl" style="top:1362.60px;left:706.50px"><span class="dk">          </span><span class="jk">&quot;label&quot;</span><span class="dk">: </span><span class="st">&quot;t:options.page&quot;</span></div>
<div class="ln" style="top:1395.45px">36</div>
<div class="cl" style="top:1395.45px;left:706.50px"><span class="dk">        },</span></div>
<div class="ln" style="top:1428.30px">37</div>
<div class="cl" style="top:1428.30px;left:706.50px"><span class="dk">        {</span></div>
<div class="ln" style="top:1461.15px">38</div>
<div class="cl" style="top:1461.15px;left:706.50px"><span class="dk">          </span><span class="jk">&quot;value&quot;</span><span class="dk">: </span><span class="st">&quot;full-width&quot;</span><span class="dk">,</span></div>
<div class="ln" style="top:1494.00px">39</div>
<div class="cl" style="top:1494.00px;left:706.50px"><span class="dk">          </span><span class="jk">&quot;label&quot;</span><span class="dk">: </span><span class="st">&quot;t:options.full&quot;</span></div>
<div class="ln" style="top:1526.85px">40</div>
<div class="cl" style="top:1526.85px;left:706.50px"><span class="dk">        }</span></div>
<div class="ln" style="top:1559.70px">41</div>
<div class="cl" style="top:1559.70px;left:706.50px"><span class="dk">      </span><span class="b2">]</span><span class="dk">,</span></div>
<div class="ln" style="top:1592.55px">42</div>
<div class="cl" style="top:1592.55px;left:706.50px"><span class="dk">      </span><span class="jk">&quot;default&quot;</span><span class="dk">: </span><span class="st">&quot;page-width&quot;</span></div>
<div class="ln" style="top:1625.40px">43</div>
<div class="cl" style="top:1625.40px;left:706.50px"><span class="dk">    },</span></div>
<div id="scroll"></div>
<div class="abs" style="left:2960px;top:278px;width:18px;height:3px;background:#6a6a6a"></div>
<div class="abs" style="left:2969px;top:280.5px;width:7px;height:10px;background:#8e8e8e"></div>
<div id="redbox"></div>
</body></html>
